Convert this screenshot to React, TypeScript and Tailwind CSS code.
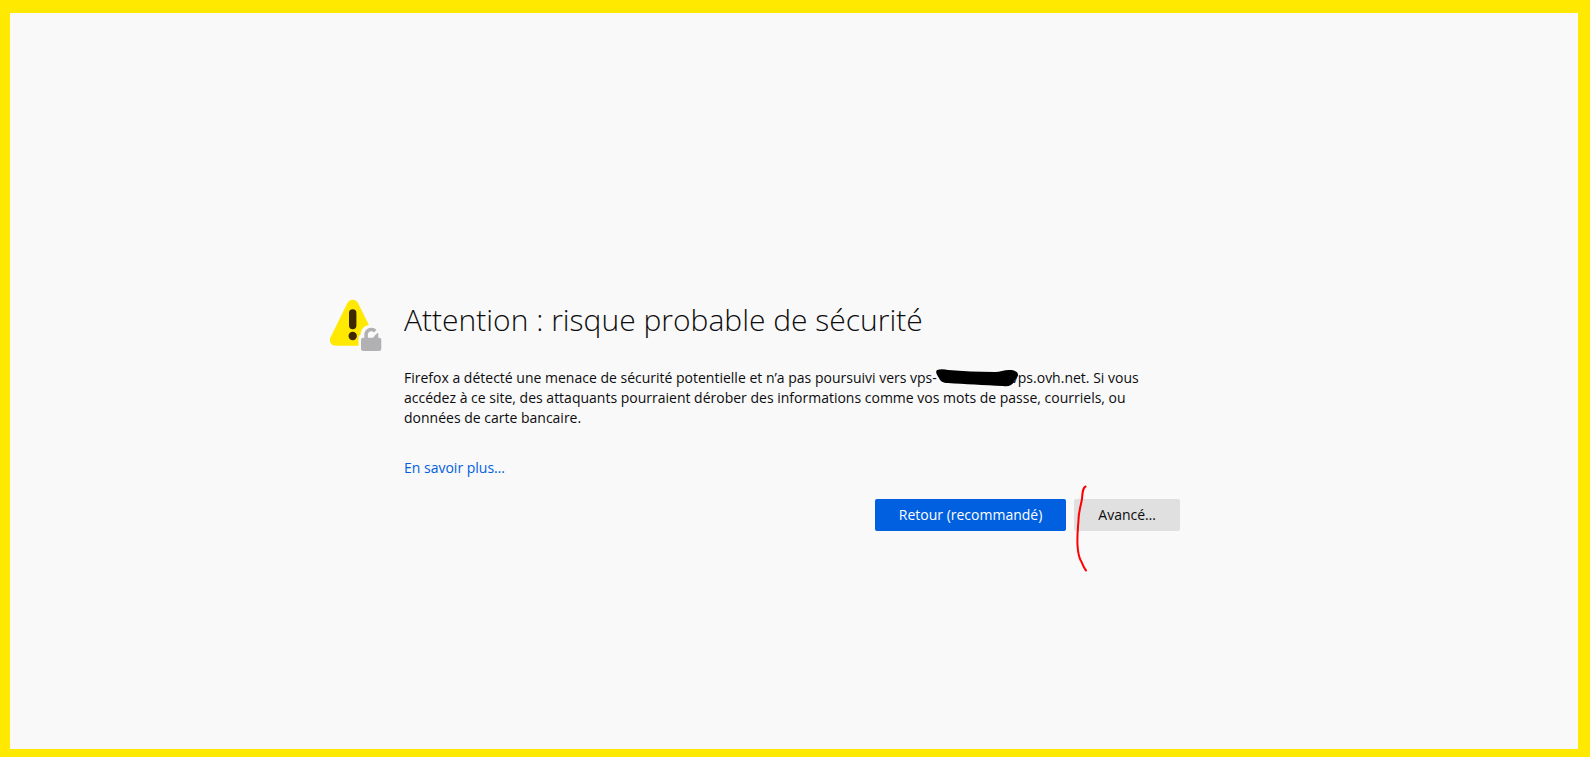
import React from 'react';

function WarningIcon() {
  return (
    <svg className="w-13 h-13 shrink-0" viewBox="0 0 52 52" fill="none" aria-hidden="true">
      <path
        d="M22.7 0.7c2.4 0 4.3 1.3 5.4 3.5l16.6 33.5c1.9 4.6-.6 9-5.2 9H5.3c-4.500 0-6.700-4.400-4.700-8.500L17.300 4.200c1.100-2.200 3-3.500 5.400-3.500z"
        fill="#ffe900"
      />
      <rect x="19" y="10.300" width="7.400" height="20" rx="3.700" fill="#3e2800" />
      <circle cx="22.700" cy="37" r="4.200" fill="#3e2800" />
      {/* Open padlock */}
      <path d="M28.500 52V39c0-1.500.8-2.500 2-3.200.7-6.400 4.500-10 10.800-10 6.500 0 10.700 4.200 10.700 10V52z" fill="#f9f9fa" />
      <rect x="31" y="38.700" width="20.300" height="13.300" rx="2.200" fill="#b1b1b3" />
      <path
        d="M34.300 40v-4.300c0-4.100 3-7 7-7 2.200 0 4 .8 5.200 2.200l-2.600 2.600c-.7-.8-1.500-1.200-2.600-1.200-2 0-3.400 1.400-3.400 3.400V40zM48.300 33.500v6.500h-6l2.700-3.700z"
        fill="#b1b1b3"
      />
    </svg>
  );
}

export default function App() {
  return (
    <div className="min-h-screen flex bg-[#f9f9fa] border-t-[13px] border-r-[12px] border-b-8 border-l-[10px] border-[#ffe900] font-['Open_Sans','Noto_Sans',sans-serif] text-[#0c0c0d]">
      <main className="flex-1 flex items-center justify-center px-4 pr-5 pt-[82px] pb-[14px]">
        <div className="w-full max-w-[924px] flex pr-[74px]">
          <WarningIcon />

          <div className="flex-1 ml-[22px]">
            <h1 className="text-[30px] leading-[42px] font-light">Attention : risque probable de sécurité</h1>

            <p className="mt-[27px] text-sm leading-5">
              Firefox a détecté une menace de sécurité potentielle et n’a pas poursuivi vers vps-
              <span className="relative inline-block w-[74px]">
                {/* Hidden part of the host name */}
                <svg className="absolute -left-px -top-3.5 w-[82px] h-[18px]" viewBox="0 0 82 18" aria-hidden="true">
                  <path
                    d="M1 1C4 0 8 0 12 1c15 1 30 2 47 2 5 0 9-2 14-2 6 0 9 2 9 5-1 3-3 4-4 7-2 3-5 5-11 4C48 16 28 15 12 14 7 14 4 12 3 9 1 6-1 3 1 1z"
                    fill="#000"
                  />
                </svg>
              </span>
              vps.ovh.net. Si vous
              <br />
              accédez à ce site, des attaquants pourraient dérober des informations comme vos mots de passe, courriels, ou
              <br />
              données de carte bancaire.
            </p>

            <p className="mt-[30px] text-sm leading-5">
              <a href="#" className="text-[#0060df]">En savoir plus…</a>
            </p>

            <div className="mt-[21px] flex justify-end gap-2">
              <button type="button" className="h-8 px-6 rounded-xs bg-[#0060df] text-sm text-white">
                Retour (recommandé)
              </button>
              <div className="relative">
                <button type="button" className="h-8 px-6 rounded-xs bg-[#e0e0e1] text-sm">
                  Avancé…
                </button>
                {/* Hand-drawn red mark */}
                <svg
                  className="absolute left-[2px] -top-[14px] w-[12px] h-[88px] pointer-events-none"
                  viewBox="0 0 12 88"
                  fill="none"
                  aria-hidden="true"
                >
                  <path
                    d="M9.500 1.500C6.500 3 6.500 8 6 14 5 20 2.500 27 2.500 35 2 43 1 50 1.500 60c.5 8 1 11 3 15 2 3 2.500 7 5.500 10.500"
                    stroke="#ff0000"
                    strokeWidth="2"
                    strokeLinecap="round"
                  />
                </svg>
              </div>
            </div>
          </div>
        </div>
      </main>
    </div>
  );
}
